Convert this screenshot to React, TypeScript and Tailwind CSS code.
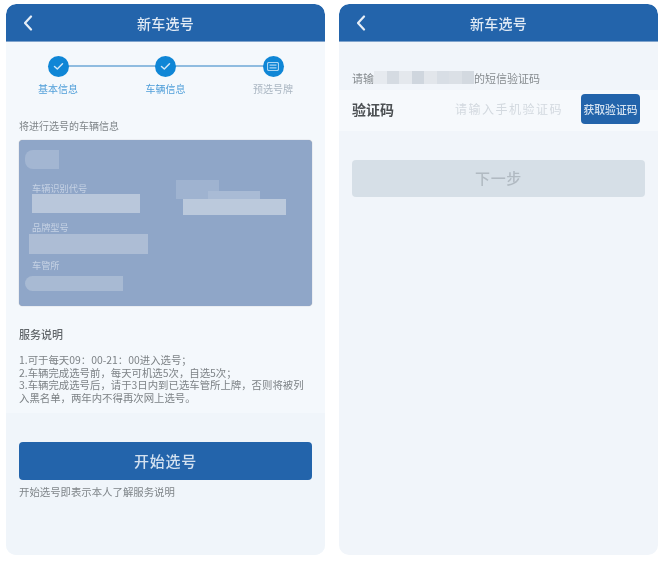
import React from "react";

const font = { fontFamily: '"Noto Sans CJK SC", "Noto Sans", sans-serif' };

function Back() {
  return (
    <svg width="10" height="16" viewBox="0 0 10 16" fill="none" stroke="#e6eef7" strokeWidth="2.2" strokeLinecap="round" strokeLinejoin="round">
      <path d="M8 1.5 2 8l6 6.5" />
    </svg>
  );
}

function Header() {
  return (
    <div className="relative flex h-[38px] shrink-0 items-center justify-center rounded-t-[10px] border-b border-[#7fa3cc] bg-[#2364ab]">
      <div className="absolute left-[17px] top-[11px]">
        <Back />
      </div>
      <span className="mt-[2px] text-[14px] font-medium tracking-[0.3px] text-[#dfe9f4] blur-[0.5px]">新车选号</span>
    </div>
  );
}

function Done() {
  return (
    <div className="flex h-[21px] w-[21px] items-center justify-center rounded-full bg-[#0f86d6]">
      <svg width="11" height="9" viewBox="0 0 11 9" fill="none" stroke="#cfe7f8" strokeWidth="1.5" strokeLinecap="round" strokeLinejoin="round">
        <path d="M1.5 4.5 4.3 7 9.5 1.8" />
      </svg>
    </div>
  );
}

function PlateStep() {
  return (
    <div className="flex h-[21px] w-[21px] items-center justify-center rounded-full bg-[#0f86d6]">
      <svg width="12" height="9" viewBox="0 0 12 9" fill="none" stroke="#a9d5f3" strokeWidth="1.2">
        <rect x="0.5" y="0.5" width="11" height="8" rx="1.5" />
        <path d="M2.5 3.2h7M2.5 5.8h7" />
      </svg>
    </div>
  );
}

function Step({ icon, label, grey }: { icon: React.ReactNode; label: string; grey?: boolean }) {
  return (
    <div className="z-10 flex w-[60px] flex-col items-center gap-[4px]">
      {icon}
      <span className={`text-[10px] leading-[16px] blur-[0.5px] ${grey ? "text-[#aab6c2]" : "text-[#4f9ed9]"}`}>{label}</span>
    </div>
  );
}

function Redact({ className }: { className: string }) {
  return <div className={`absolute ${className}`} />;
}

function Field({ label, className }: { label: string; className: string }) {
  return <div className={`text-[9.2px] leading-[12px] text-[#c6d2e4] blur-[0.5px] ${className}`}>{label}</div>;
}

function LeftPhone() {
  return (
    <div className="flex h-[551px] w-[319px] flex-col overflow-hidden rounded-[10px] bg-[#f4f8fc]">
      <Header />
      <div className="relative mt-[14px] flex justify-between px-[22px]">
        <div className="absolute left-[52px] right-[52px] top-[9px] h-[2px] bg-[#8fbce0]" />
        <Step icon={<Done />} label="基本信息" />
        <Step icon={<Done />} label="车辆信息" />
        <Step icon={<PlateStep />} label="预选号牌" grey />
      </div>

      <div className="mt-[22px] pl-[13px] text-[10px] leading-[14px] text-[#7f8589] blur-[0.4px]">将进行选号的车辆信息</div>

      <div className="relative mx-[13px] mt-[7px] h-[166px] shrink-0 rounded-[4px] bg-[#8fa6c8] pl-[13px] pt-[42px] shadow-[0_0_1px_#8a8f96]">
        <Redact className="left-[6px] top-[10px] h-[19px] w-[34px] rounded-l-[8px] bg-[#a3b6d2] blur-[0.5px]" />
        <Field label="车辆识别代号" className="" />
        <Redact className="left-[13px] top-[54px] h-[19px] w-[108px] bg-[#b9c7db]" />
        <Redact className="left-[157px] top-[40px] h-[19px] w-[43px] bg-[#9fb3d0] blur-[0.5px]" />
        <Redact className="left-[189px] top-[51px] h-[8px] w-[52px] bg-[#a9bbd5] blur-[0.5px]" />
        <Redact className="left-[164px] top-[59px] h-[16px] w-[103px] bg-[#bbc9dc]" />
        <Field label="品牌型号" className="mt-[27px]" />
        <Redact className="left-[10px] top-[94px] h-[20px] w-[119px] bg-[#adbdd5]" />
        <Field label="车管所" className="mt-[26px]" />
        <Redact className="left-[6px] top-[136px] h-[15px] w-[98px] rounded-l-[8px] bg-[#a8bad3] blur-[0.5px]" />
      </div>

      <div className="mt-[21px] pl-[13px] text-[11px] font-medium leading-[14px] text-[#62676b] blur-[0.4px]">服务说明</div>
      <div className="mt-[13px] pl-[13px] pr-[14px] text-[10.4px] leading-[12.7px] text-[#7d8286] blur-[0.4px]">
        <div>1.可于每天09：00-21：00进入选号；</div>
        <div>2.车辆完成选号前，每天可机选5次，自选5次；</div>
        <div>3.车辆完成选号后，请于3日内到已选车管所上牌，否则将被列入黑名单，两年内不得再次网上选号。</div>
      </div>

      <div className="mt-[8px] flex flex-1 flex-col bg-[#f0f5fa] px-[13px] pt-[29px]">
        <div className="flex h-[38px] shrink-0 items-center justify-center rounded-[4px] bg-[#2364ab] text-[15px] font-medium tracking-[0.8px] text-[#d3e1f0] blur-[0.3px]">开始选号</div>
        <div className="mt-[5px] text-[10.4px] leading-[13px] text-[#7f8589] blur-[0.4px]">开始选号即表示本人了解服务说明</div>
      </div>
    </div>
  );
}

const mosaic = ["bg-[#e6eaef]", "bg-[#d5dbe2]", "bg-[#e4e8ed]", "bg-[#cfd6de]", "bg-[#e2e6eb]", "bg-[#d8dee5]", "bg-[#dbe0e6]", "bg-[#d3d9e0]"];

function RightPhone() {
  return (
    <div className="flex h-[551px] w-[319px] flex-col overflow-hidden rounded-[10px] bg-[#f1f5fa]">
      <Header />
      <div className="relative mt-[29px] pl-[13px] text-[11px] leading-[14px] text-[#868b8f] blur-[0.4px]">
        请输
        <span className="ml-[100px]">的短信验证码</span>
        <div className="absolute left-[35px] top-[0px] flex h-[13px] w-[100px]">
          {mosaic.map((c, i) => (
            <div key={i} className={`flex-1 ${c}`} />
          ))}
        </div>
      </div>
      <div className="mt-[5px] flex h-[41px] items-center bg-[#f6f9fc] pb-[3px] pl-[13px] pr-[18px]">
        <span className="w-[103px] text-[14px] font-semibold text-[#4c5053] blur-[0.4px]">验证码</span>
        <span className="text-[12px] tracking-[1.5px] text-[#d3d9df] blur-[0.4px]">请输入手机验证码</span>
        <div className="ml-auto flex h-[30px] w-[59px] shrink-0 items-center justify-center rounded-[4px] bg-[#2364ab] text-[10.8px] font-medium text-[#d3e1f0] blur-[0.2px]">获取验证码</div>
      </div>
      <div className="mx-[13px] mt-[29px] flex h-[37px] items-center justify-center rounded-[4px] bg-[#d6dfe7] text-[15px] font-medium tracking-[0.6px] text-[#b1bac2] blur-[0.4px]">下一步</div>
    </div>
  );
}

export default function App() {
  return (
    <div className="flex h-[562px] w-[665px] gap-[14px] bg-white pl-[6px] pt-[4px]" style={font}>
      <LeftPhone />
      <RightPhone />
    </div>
  );
}
